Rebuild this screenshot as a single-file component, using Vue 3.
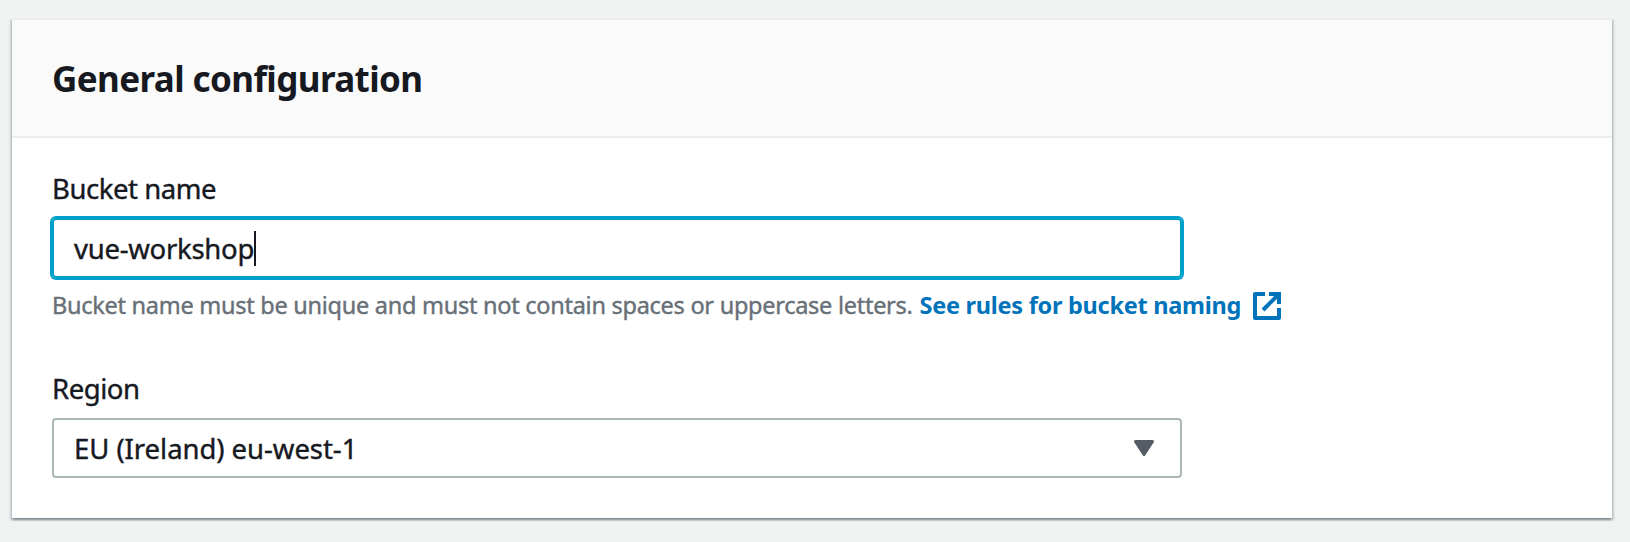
<script setup>
import { ref } from 'vue'

const bucketName = ref('vue-workshop')
const region = ref('EU (Ireland) eu-west-1')
</script>

<template>
  <main class="page">
    <section class="card">
      <header class="card-header">
        <h2 class="title">General configuration</h2>
      </header>
      <div class="card-body">
        <div class="field">
          <div class="label">Bucket name</div>
          <div class="control focused">
            <span class="value value-bucket">{{ bucketName }}</span><i class="caret"></i>
          </div>
          <div class="hint">
            <span class="hint-text">Bucket name must be unique and must not contain spaces or uppercase letters.</span>
            <a class="link"><span>See rules for bucket naming</span>
              <svg class="external" viewBox="0 0 28 28" width="28" height="28" fill="none" stroke="currentColor" stroke-width="4">
                <path d="M12 2H2V26H26V16" stroke-linejoin="round" />
                <path d="M16 2H26V12M25.500 2.500L10 18" />
              </svg>
            </a>
          </div>
        </div>
        <div class="field">
          <div class="label">Region</div>
          <div class="control select">
            <span class="value">{{ region }}</span>
            <svg class="arrow" viewBox="0 0 20 16" width="20" height="16">
              <path d="M1.500 1.500H18.500L10 14.500Z" fill="#545b64" stroke="#545b64" stroke-width="3" stroke-linejoin="round" />
            </svg>
          </div>
        </div>
      </div>
    </section>
  </main>
</template>

<style>
body {
  background: #f1f3f3;
}
</style>

<style scoped>
.page {
  box-sizing: border-box;
  width: 1630px;
  height: 542px;
  padding: 18px 18px 24px 12px;
  background: #f1f3f3;
  font-family: "Noto Sans", "Open Sans", sans-serif;
  color: #16191f;
  overflow: hidden;
}
.card {
  box-sizing: border-box;
  height: 500px;
  border-top: 2px solid #eaeded;
  background: #fff;
  box-shadow:
    0 2px 2px 0 rgba(0, 28, 36, 0.3),
    2px 2px 2px 0 rgba(0, 28, 36, 0.15),
    -2px 2px 2px 0 rgba(0, 28, 36, 0.15);
}
.card-header {
  box-sizing: border-box;
  height: 118px;
  padding: 34px 40px 0;
  background: #fafafa;
  border-bottom: 2px solid #eaeded;
}
.title {
  margin: 0;
  font-size: 35px;
  line-height: 50px;
  font-weight: 700;
  letter-spacing: -0.6px;
}
.card-body {
  padding: 32px 40px 0;
}
.field {
  height: 200px;
}
.label {
  height: 48px;
  line-height: 38px;
  font-size: 27.500px;
  letter-spacing: -0.450px;
  -webkit-text-stroke: 0.4px currentColor;
}
.control {
  box-sizing: border-box;
  display: flex;
  align-items: center;
  width: 1130px;
  height: 60px;
  padding: 0 26px 0 20px;
  border: 2px solid #aab7b8;
  border-radius: 4px;
  font-size: 27.500px;
  line-height: 40px;
  white-space: nowrap;
}
.value {
  padding-top: 2px;
  letter-spacing: -0.05px;
  -webkit-text-stroke: 0.4px currentColor;
}
.value-bucket {
  letter-spacing: -0.270px;
}
.focused {
  border-color: #00a1c9;
  box-shadow: 0 0 0 2px #00a1c9;
}
.caret {
  width: 2px;
  height: 35px;
  background: #16191f;
}
.select {
  justify-content: space-between;
}
.hint {
  display: flex;
  align-items: center;
  height: 36px;
  margin-top: 9px;
  font-size: 23.500px;
  line-height: 36px;
  letter-spacing: -0.270px;
  color: #687078;
  white-space: nowrap;
}
.hint-text {
  -webkit-text-stroke: 0.4px currentColor;
}
.link {
  display: flex;
  align-items: center;
  margin-left: 7px;
  color: #0073bb;
  font-weight: 700;
}
.external {
  margin: 2px 0 0 12px;
}
</style>
